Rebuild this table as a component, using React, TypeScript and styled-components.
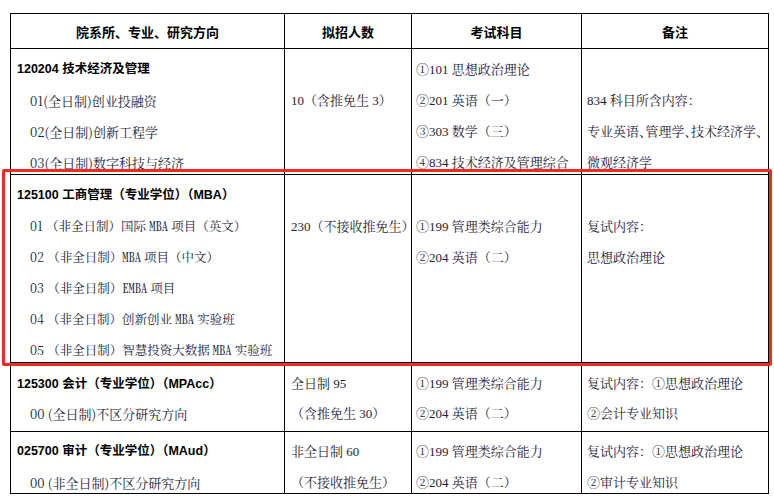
import React from "react";
import styled, { createGlobalStyle } from "styled-components";

const Global = createGlobalStyle`
  html, body { margin: 0; padding: 0; background: #fff; }
  body { width: 774px; height: 498px; overflow: hidden; }
`;

const SERIF = `"Liberation Serif", "Noto Serif CJK SC", "Noto Sans CJK SC", serif`;
const CJK_SERIF = `"Noto Serif CJK SC", "Liberation Serif", serif`;
const SANS = `"Liberation Sans", "Noto Sans CJK SC", sans-serif`;

const Page = styled.div`
  position: relative;
  padding: 13px 0 0 10px;
`;

const Table = styled.table`
  border-collapse: collapse;
  table-layout: fixed;
  width: 758px;
`;

const Col = styled.col<{ $w: number }>`
  width: ${(p) => p.$w}px;
`;

const HeadCell = styled.th`
  height: 34px;
  padding: 0;
  border: 1px solid #000;
  font-family: ${SANS};
  font-weight: 700;
  font-size: 13px;
  color: #000;
  text-align: center;
  vertical-align: middle;
`;

const Cell = styled.td`
  padding: 0;
  border: 1px solid #000;
  vertical-align: top;
`;

const Box = styled.div<{ $h: number; $pl: number; $pt: number }>`
  box-sizing: border-box;
  height: ${(p) => p.$h}px;
  padding: ${(p) => p.$pt}px 0 0 ${(p) => p.$pl}px;
  overflow: visible;
`;

const Heading = styled.div<{ $lh: number }>`
  font-family: ${SANS};
  font-weight: 700;
  font-size: 12.5px;
  color: #000;
  line-height: ${(p) => p.$lh}px;
  height: ${(p) => p.$lh}px;
  white-space: nowrap;
`;

const Line = styled.div<{ $lh: number; $halt?: boolean }>`
  font-family: ${SERIF};
  font-size: 13px;
  color: #1f2236;
  line-height: ${(p) => p.$lh}px;
  height: ${(p) => p.$lh}px;
  white-space: nowrap;
  font-feature-settings: ${(p) => (p.$halt ? `"halt"` : "normal")};
`;

const Item = styled.div<{ $lh: number; $size: number }>`
  font-family: ${CJK_SERIF};
  font-size: ${(p) => p.$size}px;
  color: #20243c;
  line-height: ${(p) => p.$lh}px;
  height: ${(p) => p.$lh}px;
  padding-left: 13px;
  white-space: nowrap;
`;

const Half = styled.span`
  font-feature-settings: "hwid";
`;

const Highlight = styled.div`
  position: absolute;
  left: 2px;
  top: 169px;
  width: 764px;
  height: 191px;
  border: 3px solid #f52a1e;
  border-radius: 2px;
  pointer-events: none;
`;

type Block = {
  lh: number;
  pt: number;
  h: number;
  itemSize: number;
  heading: string;
  items: string[];
  c2: string[];
  c3: string[];
  c4: string[];
};

const rows: Block[] = [
  {
    lh: 31, pt: 5, h: 125, itemSize: 13,
    heading: "120204 技术经济及管理",
    items: ["01(全日制)创业投融资", "02(全日制)创新工程学", "03(全日制)数字科技与经济"],
    c2: ["", "10（含推免生 3）"],
    c3: ["①101 思想政治理论", "②201 英语（一）", "③303 数学（三）", "④834 技术经济及管理综合"],
    c4: ["", "834 科目所含内容：", "专业英语、管理学、技术经济学、", "微观经济学"],
  },
  {
    lh: 31, pt: 5, h: 187, itemSize: 12.5,
    heading: "125100 工商管理（专业学位）（MBA）",
    items: [
      "01 （非全日制）国际 MBA 项目（英文）",
      "02 （非全日制）MBA 项目（中文）",
      "03 （非全日制）EMBA 项目",
      "04 （非全日制）创新创业 MBA 实验班",
      "05 （非全日制）智慧投资大数据 MBA 实验班",
    ],
    c2: ["", "230（不接收推免生）"],
    c3: ["", "①199 管理类综合能力", "②204 英语（二）"],
    c4: ["", "复试内容：", "思想政治理论"],
  },
  {
    lh: 30, pt: 6, h: 68, itemSize: 13,
    heading: "125300 会计（专业学位）（MPAcc）",
    items: ["00 (全日制)不区分研究方向"],
    c2: ["全日制 95", "（含推免生 30）"],
    c3: ["①199 管理类综合能力", "②204 英语（二）"],
    c4: ["复试内容：①思想政治理论", "②会计专业知识"],
  },
  {
    lh: 31, pt: 4, h: 61, itemSize: 13,
    heading: "025700 审计（专业学位）（MAud）",
    items: ["00 (非全日制)不区分研究方向"],
    c2: ["非全日制 60", "（不接收推免生）"],
    c3: ["①199 管理类综合能力", "②204 英语（二）"],
    c4: ["复试内容：①思想政治理论", "②审计专业知识"],
  },
];

function renderText(t: string) {
  return t.split(/([A-Z]{2,})/).map((part, k) =>
    /^[A-Z]{2,}$/.test(part) ? <Half key={k}>{part}</Half> : <React.Fragment key={k}>{part}</React.Fragment>
  );
}

export default function App() {
  return (
    <Page>
      <Global />
      <Table>
        <colgroup>
          <Col $w={274} />
          <Col $w={127} />
          <Col $w={170} />
          <Col $w={187} />
        </colgroup>
        <thead>
          <tr>
            <HeadCell>院系所、专业、研究方向</HeadCell>
            <HeadCell>拟招人数</HeadCell>
            <HeadCell>考试科目</HeadCell>
            <HeadCell>备注</HeadCell>
          </tr>
        </thead>
        <tbody>
          {rows.map((r, i) => (
            <tr key={i}>
              <Cell>
                <Box $h={r.h} $pl={6} $pt={r.pt}>
                  <Heading $lh={r.lh}>{r.heading}</Heading>
                  {r.items.map((t, j) => (
                    <Item key={j} $lh={r.lh} $size={r.itemSize}>
                      {renderText(t)}
                    </Item>
                  ))}
                </Box>
              </Cell>
              <Cell>
                <Box $h={r.h} $pl={6} $pt={r.pt}>
                  {r.c2.map((t, j) => (
                    <Line key={j} $lh={r.lh}>{t}</Line>
                  ))}
                </Box>
              </Cell>
              <Cell>
                <Box $h={r.h} $pl={4} $pt={r.pt}>
                  {r.c3.map((t, j) => (
                    <Line key={j} $lh={r.lh}>{t}</Line>
                  ))}
                </Box>
              </Cell>
              <Cell>
                <Box $h={r.h} $pl={5} $pt={r.pt}>
                  {r.c4.map((t, j) => (
                    <Line key={j} $lh={r.lh} $halt={t.includes("、")}>{t}</Line>
                  ))}
                </Box>
              </Cell>
            </tr>
          ))}
        </tbody>
      </Table>
      <Highlight />
    </Page>
  );
}
